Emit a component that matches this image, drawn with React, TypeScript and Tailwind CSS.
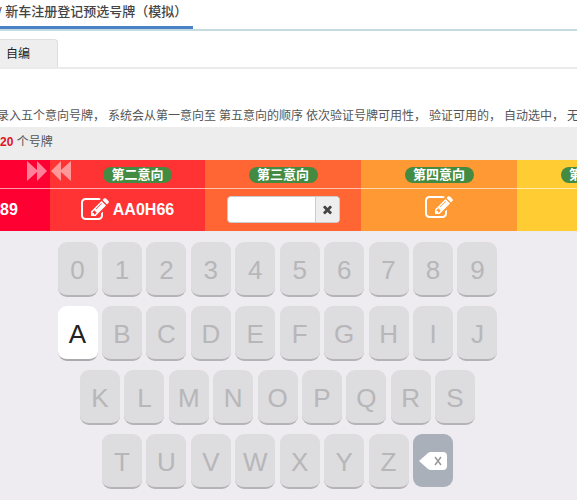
import React from 'react';

const digits = ['0', '1', '2', '3', '4', '5', '6', '7', '8', '9'];
const rowAJ = ['A', 'B', 'C', 'D', 'E', 'F', 'G', 'H', 'I', 'J'];
const rowKS = ['K', 'L', 'M', 'N', 'O', 'P', 'Q', 'R', 'S'];
const rowTZ = ['T', 'U', 'V', 'W', 'X', 'Y', 'Z'];

const notice = [
    '录入五个意向号牌，',
    '系统会从第一意向至',
    '第五意向的顺序',
    '依次验证号牌可用性，',
    '验证可用的，',
    '自动选中，',
    '无',
];

const EditIcon = () => (
    <svg viewBox="0 0 1792 1792" className="size-7 shrink-0" fill="currentColor" aria-hidden="true">
        <path d="M888 1184l116-116-152-152-116 116v56h96v96h56zm440-720q-16-16-33 1l-350 350q-17 17-1 33t33-1l350-350q17-17 1-33zm80 594v190q0 119-84.5 203.5t-203.5 84.5h-832q-119 0-203.5-84.5t-84.5-203.5v-832q0-119 84.5-203.5t203.5-84.5h832q63 0 117 25 15 7 18 23 3 17-9 29l-49 49q-14 14-32 8-23-6-45-6h-832q-66 0-113 47t-47 113v832q0 66 47 113t113 47h832q66 0 113-47t47-113v-126q0-13 9-22l64-64q15-15 35-7t20 29zm-96-738l288 288-672 672h-288v-288zm444 132l-92 92-288-288 92-92q28-28 68-28t68 28l152 152q28 28 28 68t-28 68z" />
    </svg>
);

const ClearIcon = () => (
    <svg viewBox="0 0 1792 1792" className="size-[13px]" fill="currentColor" aria-hidden="true">
        <path d="M1490 1322q0 40-28 68l-136 136q-28 28-68 28t-68-28l-294-294-294 294q-28 28-68 28t-68-28l-136-136q-28-28-28-68t28-68l294-294-294-294q-28-28-28-68t28-68l136-136q28-28 68-28t68 28l294 294 294-294q28-28 68-28t68 28l136 136q28 28 28 68t-28 68l-294 294 294 294q28 28 28 68z" />
    </svg>
);

const MoveRight = () => (
    <svg viewBox="0 0 20 20" className="h-5 w-5" fill="currentColor" aria-hidden="true">
        <path d="M0 0l10 9V0l10 10-10 10v-9L0 20z" />
    </svg>
);

const MoveLeft = () => (
    <svg viewBox="0 0 20 20" className="h-5 w-5" fill="currentColor" aria-hidden="true">
        <path d="M20 0l-10 9V0L0 10l10 10v-9l10 9z" />
    </svg>
);

const Badge = ({ children }: { children: React.ReactNode }) => (
    <span className="inline-block h-4 w-[69px] rounded-full bg-[#438b43] text-center text-[13px] leading-4 font-bold whitespace-nowrap text-white">
        {children}
    </span>
);

const Key = ({ label, active = false }: { label: string; active?: boolean }) => (
    <button
        type="button"
        disabled={!active}
        className={`h-[55px] w-10 rounded-[9px] border-b-2 pt-[2px] text-center text-[26px] leading-none ${
            active ? 'border-[#aaa9ad] bg-white text-[#222]' : 'border-[#b5b3b7] bg-[#dddcdf] text-[#b7b6b9]'
        }`}
    >
        {label}
    </button>
);

const App = () => {
    return (
        <div className="flex min-h-screen flex-col overflow-hidden bg-white font-['Liberation_Sans','Noto_Sans_CJK_SC',sans-serif] text-[#555]">
            <header className="flex h-[31px] items-start border-b-2 border-[#c5dbe2]">
                <h1 className="h-[29px] w-[193px] border-b-3 border-[#4b82c6] text-[13px] leading-6 font-medium whitespace-nowrap text-[#444]">
                    <span className="-ml-[2px]">/ 新车注册登记预选号牌（模拟）</span>
                </h1>
            </header>

            <nav className="mt-2 flex border-b-2 border-[#ebebed]">
                <button type="button" className="h-7 w-[58px] rounded-tr-[4px] border-t border-r border-[#dedede] bg-[#eee] pl-[6px] text-left text-xs text-[#222]">
                    自编
                </button>
            </nav>

            <p className="mt-[35px] -ml-[3px] flex h-[23px] gap-[3px] text-xs leading-6 whitespace-nowrap">
                {notice.map((part) => (
                    <span key={part}>{part}</span>
                ))}
            </p>

            <p className="h-[33px] bg-[#ededed] text-xs leading-[30px] whitespace-nowrap">
                <span className="font-bold text-[#e0141e]">20</span> 个号牌
            </p>

            <main className="flex-1 bg-[#eeecf0]">
                <table className="w-[673px] table-fixed border-collapse text-white">
                    <colgroup>
                        <col className="w-[50px]" />
                        <col className="w-[155px]" />
                        <col className="w-[156px]" />
                        <col className="w-[156px]" />
                        <col className="w-[156px]" />
                    </colgroup>
                    <thead>
                        <tr className="h-7 border-b border-white/60">
                            <th className="relative bg-[#ff0033] p-0">
                                <button type="button" aria-label="右移" className="absolute top-px right-[3px] text-white/50">
                                    <MoveRight />
                                </button>
                            </th>
                            <th className="relative bg-[#ff3333] p-0 pl-5">
                                <button type="button" aria-label="左移" className="absolute top-px left-px text-white/50">
                                    <MoveLeft />
                                </button>
                                <Badge>第二意向</Badge>
                            </th>
                            <th className="bg-[#ff6633] p-0">
                                <Badge>第三意向</Badge>
                            </th>
                            <th className="bg-[#ff9933] p-0">
                                <Badge>第四意向</Badge>
                            </th>
                            <th className="bg-[#ffcc33] p-0">
                                <Badge>第五意向</Badge>
                            </th>
                        </tr>
                    </thead>
                    <tbody>
                        <tr className="h-[43px]">
                            <td className="bg-[#ff0033] p-0 text-base font-bold">89</td>
                            <td className="bg-[#ff3333] p-0">
                                <button type="button" className="mx-auto flex items-center gap-1 text-base font-bold">
                                    <EditIcon />
                                    AA0H66
                                </button>
                            </td>
                            <td className="bg-[#ff6633] p-0">
                                <div className="mx-auto flex h-[27px] w-[113px] overflow-hidden rounded-[4px] border border-[#ccc] bg-white">
                                    <input type="text" aria-label="第三意向" className="w-full min-w-0 px-2 text-sm text-[#333] outline-none" />
                                    <button type="button" aria-label="清除" className="flex w-6 shrink-0 items-center justify-center border-l border-[#ccc] bg-[#eee] text-[#444]">
                                        <ClearIcon />
                                    </button>
                                </div>
                            </td>
                            <td className="bg-[#ff9933] p-0 pb-1">
                                <button type="button" aria-label="编辑第四意向" className="mx-auto block">
                                    <EditIcon />
                                </button>
                            </td>
                            <td className="bg-[#ffcc33] p-0"></td>
                        </tr>
                    </tbody>
                </table>

                <div className="flex flex-col items-center gap-[9px] pt-[11px] pr-[22px] pb-3">
                    <div className="flex w-[440px] justify-between">
                        {digits.map((k) => (
                            <Key key={k} label={k} />
                        ))}
                    </div>
                    <div className="flex w-[440px] justify-between">
                        {rowAJ.map((k) => (
                            <Key key={k} label={k} active={k === 'A'} />
                        ))}
                    </div>
                    <div className="flex w-[395px] justify-between">
                        {rowKS.map((k) => (
                            <Key key={k} label={k} />
                        ))}
                    </div>
                    <div className="flex w-[351px] justify-between">
                        {rowTZ.map((k) => (
                            <Key key={k} label={k} />
                        ))}
                        <button type="button" aria-label="退格" className="flex h-[53px] w-10 items-center justify-center rounded-[9px] bg-[#a9b0ba]">
                            <svg viewBox="0 0 28 18" className="h-[18px] w-7" aria-hidden="true">
                                <path d="M0 9l9-8q1-1 3-1h12q4 0 4 4v10q0 4-4 4H12q-2 0-3-1z" fill="#fff" />
                                <path d="M16 5l6 8M22 5l-6 8" stroke="#999" strokeWidth="1.5" fill="none" />
                            </svg>
                        </button>
                    </div>
                </div>
            </main>
        </div>
    );
};

export default App;
